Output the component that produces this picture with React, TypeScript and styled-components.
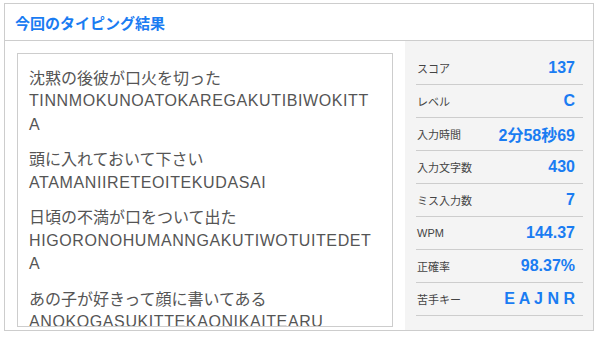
import React, { FunctionComponent } from 'react';
import styled, { createGlobalStyle } from 'styled-components';

const GlobalStyle = createGlobalStyle`
  body {
    margin: 0;
    background: #fff;
    font-family: "Liberation Sans", "Noto Sans CJK JP", sans-serif;
  }
`;

type Sentence = {
  kana: string;
  roma: string;
};

type Stat = {
  label: string;
  value: string;
};

const sentences: Sentence[] = [
  { kana: '沈黙の後彼が口火を切った', roma: 'TINNMOKUNOATOKAREGAKUTIBIWOKITTA' },
  { kana: '頭に入れておいて下さい', roma: 'ATAMANIIRETEOITEKUDASAI' },
  { kana: '日頃の不満が口をついて出た', roma: 'HIGORONOHUMANNGAKUTIWOTUITEDETA' },
  { kana: 'あの子が好きって顔に書いてある', roma: 'ANOKOGASUKITTEKAONIKAITEARU' },
];

const stats: Stat[] = [
  { label: 'スコア', value: '137' },
  { label: 'レベル', value: 'C' },
  { label: '入力時間', value: '2分58秒69' },
  { label: '入力文字数', value: '430' },
  { label: 'ミス入力数', value: '7' },
  { label: 'WPM', value: '144.37' },
  { label: '正確率', value: '98.37%' },
  { label: '苦手キー', value: 'E A J N R' },
];

const Page = styled.div`
  padding: 3px 4px;
`;

const Panel = styled.section`
  width: 590px;
  box-sizing: border-box;
  border: 1px solid #cdcdcd;
`;

const Header = styled.header`
  height: 37px;
  box-sizing: border-box;
  border-bottom: 1px solid #cdcdcd;
  display: flex;
  align-items: center;
  padding-left: 10px;
`;

const Title = styled.h2`
  margin: 0;
  font-size: 15px;
  font-weight: bold;
  color: #1a7cf2;
  font-family: "Noto Sans CJK JP", sans-serif;
`;

const Body = styled.div`
  display: flex;
  height: 289px;
`;

const Main = styled.div`
  flex: 1;
  padding: 12px 12px 3px 12px;
`;

const TextBox = styled.div`
  height: 100%;
  box-sizing: border-box;
  border: 1px solid #cdcdcd;
  padding: 11.5px 15px 0 11px;
  overflow: hidden;
  color: #555;
  font-size: 16px;
  line-height: 23.5px;
`;

const Para = styled.div`
  margin-bottom: 11px;
`;

const Kana = styled.div`
  font-family: "Noto Sans CJK JP", sans-serif;
`;

const Roma = styled.div`
  letter-spacing: 0.6px;
  word-break: break-all;
`;

const Sidebar = styled.aside`
  width: 188px;
  box-sizing: border-box;
  background: #f4f4f4;
  padding: 11px 10px 0 11px;
`;

const Row = styled.div`
  height: 33px;
  box-sizing: border-box;
  border-bottom: 1px solid #cdcdcd;
  display: flex;
  align-items: center;
  justify-content: space-between;
  padding: 0 8px 0 1px;
`;

const Label = styled.span`
  font-size: 11px;
  color: #444;
  font-family: "Liberation Sans", "Noto Sans CJK JP", sans-serif;
`;

const Value = styled.span`
  font-size: 16px;
  font-weight: bold;
  color: #1a7cf2;
  font-family: "Liberation Sans", "Noto Sans CJK JP", sans-serif;
`;

const App: FunctionComponent = () => (
  <Page>
    <GlobalStyle />
    <Panel>
      <Header>
        <Title>今回のタイピング結果</Title>
      </Header>
      <Body>
        <Main>
          <TextBox>
            {sentences.map(s => (
              <Para key={s.roma}>
                <Kana>{s.kana}</Kana>
                <Roma>{s.roma}</Roma>
              </Para>
            ))}
          </TextBox>
        </Main>
        <Sidebar>
          {stats.map(stat => (
            <Row key={stat.label}>
              <Label>{stat.label}</Label>
              <Value>{stat.value}</Value>
            </Row>
          ))}
        </Sidebar>
      </Body>
    </Panel>
  </Page>
);

export default App;
